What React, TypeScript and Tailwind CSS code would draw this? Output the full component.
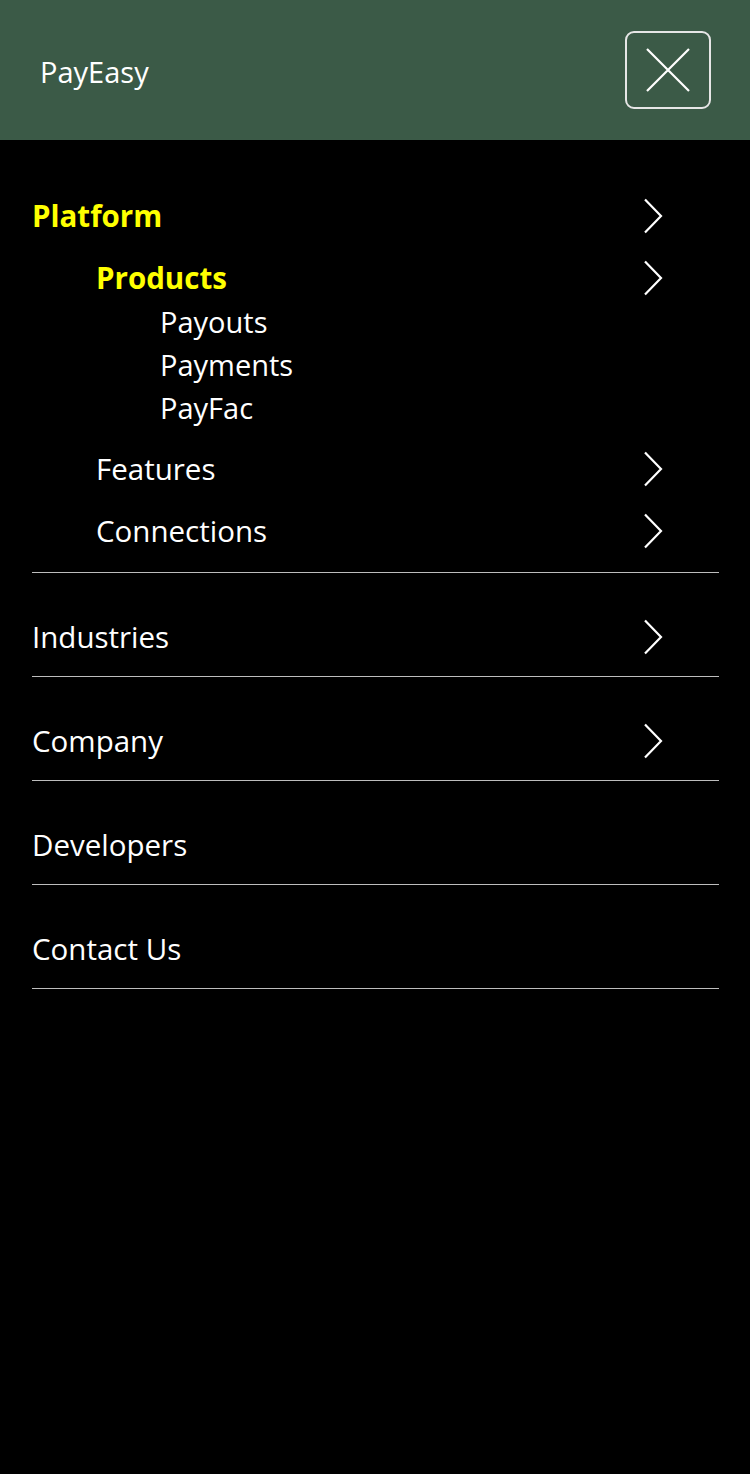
import React from "react";

const Chevron = () => (
  <svg width="20" height="36" viewBox="0 0 20 36" fill="none" className="shrink-0">
    <path d="M2 1.5 L18 18 L2 34.5" stroke="white" strokeWidth="2.2" />
  </svg>
);

export default function App() {
  const font = { fontFamily: '"Open Sans", "Noto Sans", sans-serif' };
  return (
    <div className="min-h-[1474px] w-[750px] bg-black text-white" style={font}>
      <header className="flex h-[140px] items-center justify-between bg-[#3b5a47] pl-[40px] pr-[39px]">
        <span className="pt-[3px] text-[29px] leading-none">PayEasy</span>
        <button className="flex h-[78px] w-[86px] items-center justify-center rounded-[9px] border-2 border-[#e6e6e6]">
          <svg width="46" height="46" viewBox="0 0 46 46" fill="none">
            <path d="M2 2 L44 44 M44 2 L2 44" stroke="white" strokeWidth="2.2" />
          </svg>
        </button>
      </header>
      <nav className="pl-[32px] pr-[31px] pt-[56px]">
        <ul>
          <li className="border-b border-[#bdbdbd] pb-[21px]">
            <div className="flex h-[40px] items-center justify-between pr-[56px]">
              <span className="text-[29.5px] font-bold text-[#ffff00]">Platform</span>
              <Chevron />
            </div>
            <div className="pl-[64px]">
              <div className="mt-[22px] flex h-[40px] items-center justify-between pr-[56px]">
                <span className="text-[29.5px] font-bold text-[#ffff00]">Products</span>
                <Chevron />
              </div>
              <ul className="mt-[2px] pl-[64px]">
                <li className="flex h-[43px] items-center text-[29px]">Payouts</li>
                <li className="flex h-[43px] items-center text-[29px]">Payments</li>
                <li className="flex h-[43px] items-center text-[29px]">PayFac</li>
              </ul>
              <div className="mt-[20px] flex h-[40px] items-center justify-between pr-[56px]">
                <span className="text-[29.5px]">Features</span>
                <Chevron />
              </div>
              <div className="mt-[22px] flex h-[40px] items-center justify-between pr-[56px]">
                <span className="text-[29.5px]">Connections</span>
                <Chevron />
              </div>
            </div>
          </li>
          {[
            { t: "Industries", c: true },
            { t: "Company", c: true },
            { t: "Developers", c: false },
            { t: "Contact Us", c: false },
          ].map((it) => (
            <li key={it.t} className="border-b border-[#bdbdbd] pb-[19px] pt-[44px]">
              <div className="flex h-[40px] items-center justify-between pr-[56px]">
                <span className="text-[29.5px]">{it.t}</span>
                {it.c && <Chevron />}
              </div>
            </li>
          ))}
        </ul>
      </nav>
    </div>
  );
}
